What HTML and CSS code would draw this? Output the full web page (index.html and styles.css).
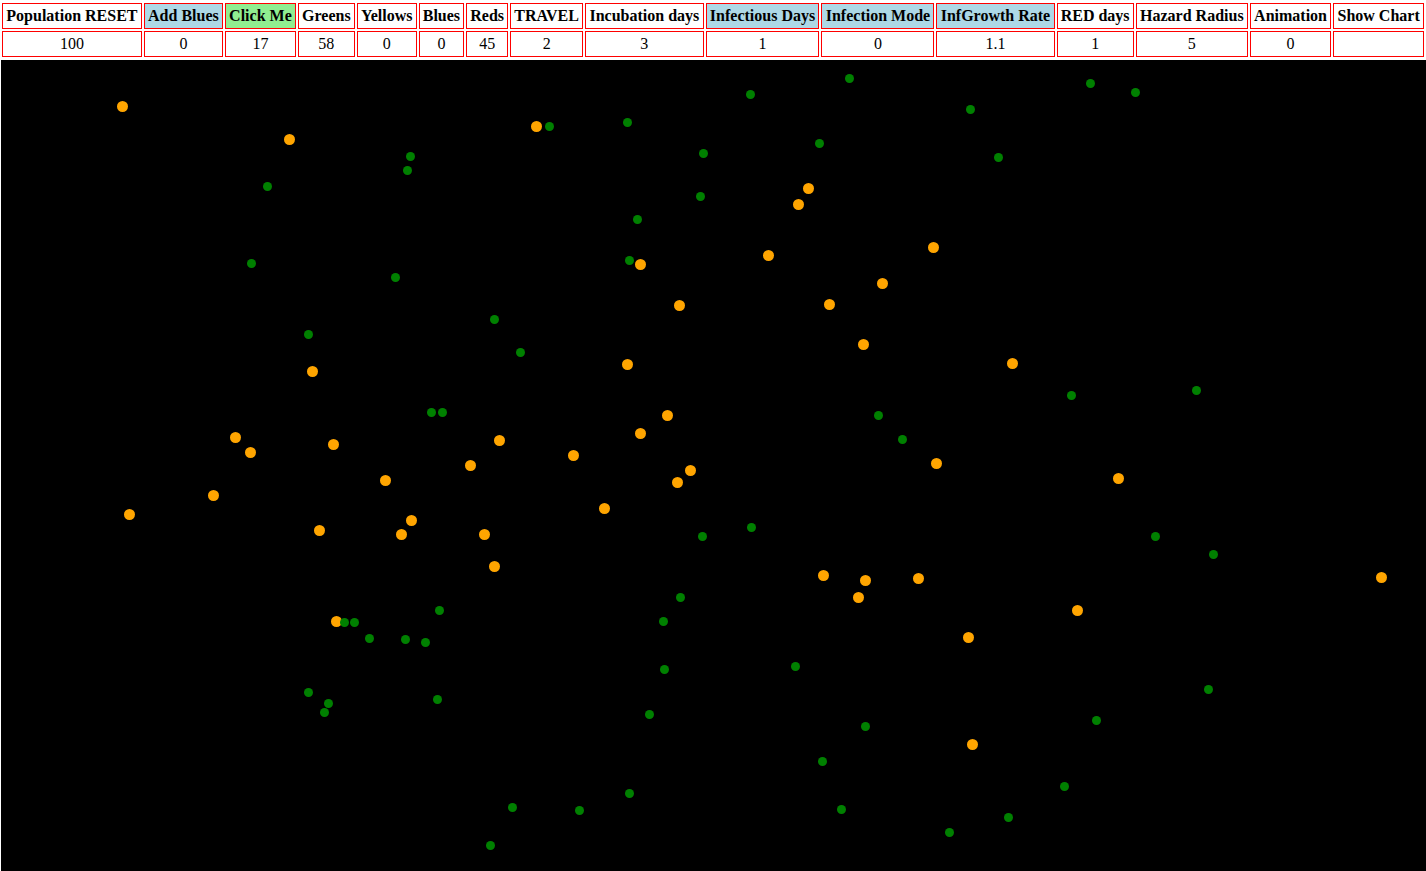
FILE: index.html
```html
<!DOCTYPE html>
<html>
<head>
<meta charset="utf-8">
<title>Simulation</title>
<link rel="stylesheet" href="styles.css">
</head>
<body>
<table class="controls">
  <tr class="heads">
    <th>Population RESET</th>
    <th class="blue">Add Blues</th>
    <th class="green">Click Me</th>
    <th>Greens</th>
    <th>Yellows</th>
    <th>Blues</th>
    <th>Reds</th>
    <th>TRAVEL</th>
    <th>Incubation days</th>
    <th class="blue">Infectious Days</th>
    <th class="blue">Infection Mode</th>
    <th class="blue">InfGrowth Rate</th>
    <th>RED days</th>
    <th>Hazard Radius</th>
    <th>Animation</th>
    <th>Show Chart</th>
  </tr>
  <tr class="vals">
    <td>100</td><td>0</td><td>17</td><td>58</td><td>0</td><td>0</td><td>45</td><td>2</td><td>3</td><td>1</td><td>0</td><td>1.1</td><td>1</td><td>5</td><td>0</td><td></td>
  </tr>
</table>
<div class="stage">
<svg class="canvas" width="1425" height="811" viewBox="0.5 59.5 1425 811">
<g fill="#ffa500">
<circle cx="122" cy="106" r="5.5"/><circle cx="289" cy="139" r="5.5"/><circle cx="536" cy="126" r="5.5"/><circle cx="808" cy="188" r="5.5"/><circle cx="798" cy="204" r="5.5"/><circle cx="768" cy="255" r="5.5"/><circle cx="933" cy="247" r="5.5"/><circle cx="640" cy="264" r="5.5"/><circle cx="882" cy="283" r="5.5"/><circle cx="679" cy="305" r="5.5"/><circle cx="829" cy="304" r="5.5"/><circle cx="863" cy="344" r="5.5"/><circle cx="627" cy="364" r="5.5"/><circle cx="1012" cy="363" r="5.5"/><circle cx="312" cy="371" r="5.5"/><circle cx="667" cy="415" r="5.5"/><circle cx="640" cy="433" r="5.5"/><circle cx="235" cy="437" r="5.5"/><circle cx="250" cy="452" r="5.5"/><circle cx="333" cy="444" r="5.5"/><circle cx="499" cy="440" r="5.5"/><circle cx="470" cy="465" r="5.5"/><circle cx="573" cy="455" r="5.5"/><circle cx="936" cy="463" r="5.5"/><circle cx="690" cy="470" r="5.5"/><circle cx="677" cy="482" r="5.5"/><circle cx="385" cy="480" r="5.5"/><circle cx="1118" cy="478" r="5.5"/><circle cx="213" cy="495" r="5.5"/><circle cx="129" cy="514" r="5.5"/><circle cx="604" cy="508" r="5.5"/><circle cx="411" cy="520" r="5.5"/><circle cx="319" cy="530" r="5.5"/><circle cx="401" cy="534" r="5.5"/><circle cx="484" cy="534" r="5.5"/><circle cx="494" cy="566" r="5.5"/><circle cx="823" cy="575" r="5.5"/><circle cx="865" cy="580" r="5.5"/><circle cx="918" cy="578" r="5.5"/><circle cx="858" cy="597" r="5.5"/><circle cx="1381" cy="577" r="5.5"/><circle cx="1077" cy="610" r="5.5"/><circle cx="336" cy="621" r="5.5"/><circle cx="968" cy="637" r="5.5"/><circle cx="972" cy="744" r="5.5"/>
</g>
<g fill="#008000">
<circle cx="849" cy="78" r="4.5"/><circle cx="750" cy="94" r="4.5"/><circle cx="1090" cy="83" r="4.5"/><circle cx="1135" cy="92" r="4.5"/><circle cx="970" cy="109" r="4.5"/><circle cx="549" cy="126" r="4.5"/><circle cx="627" cy="122" r="4.5"/><circle cx="703" cy="153" r="4.5"/><circle cx="819" cy="143" r="4.5"/><circle cx="410" cy="156" r="4.5"/><circle cx="407" cy="170" r="4.5"/><circle cx="998" cy="157" r="4.5"/><circle cx="267" cy="186" r="4.5"/><circle cx="700" cy="196" r="4.5"/><circle cx="637" cy="219" r="4.5"/><circle cx="251" cy="263" r="4.5"/><circle cx="629" cy="260" r="4.5"/><circle cx="395" cy="277" r="4.5"/><circle cx="308" cy="334" r="4.5"/><circle cx="494" cy="319" r="4.5"/><circle cx="520" cy="352" r="4.5"/><circle cx="1071" cy="395" r="4.5"/><circle cx="1196" cy="390" r="4.5"/><circle cx="431" cy="412" r="4.5"/><circle cx="442" cy="412" r="4.5"/><circle cx="878" cy="415" r="4.5"/><circle cx="902" cy="439" r="4.5"/><circle cx="751" cy="527" r="4.5"/><circle cx="702" cy="536" r="4.5"/><circle cx="1155" cy="536" r="4.5"/><circle cx="1213" cy="554" r="4.5"/><circle cx="680" cy="597" r="4.5"/><circle cx="439" cy="610" r="4.5"/><circle cx="663" cy="621" r="4.5"/><circle cx="344" cy="622" r="4.5"/><circle cx="354" cy="622" r="4.5"/><circle cx="369" cy="638" r="4.5"/><circle cx="405" cy="639" r="4.5"/><circle cx="425" cy="642" r="4.5"/><circle cx="664" cy="669" r="4.5"/><circle cx="795" cy="666" r="4.5"/><circle cx="1208" cy="689" r="4.5"/><circle cx="308" cy="692" r="4.5"/><circle cx="328" cy="703" r="4.5"/><circle cx="324" cy="712" r="4.5"/><circle cx="437" cy="699" r="4.5"/><circle cx="649" cy="714" r="4.5"/><circle cx="1096" cy="720" r="4.5"/><circle cx="865" cy="726" r="4.5"/><circle cx="822" cy="761" r="4.5"/><circle cx="1064" cy="786" r="4.5"/><circle cx="629" cy="793" r="4.5"/><circle cx="512" cy="807" r="4.5"/><circle cx="579" cy="810" r="4.5"/><circle cx="841" cy="809" r="4.5"/><circle cx="1008" cy="817" r="4.5"/><circle cx="949" cy="832" r="4.5"/><circle cx="490" cy="845" r="4.5"/>
</g>
</svg>
</div>
</body>
</html>
```

FILE: styles.css
```css
html, body {
  margin: 0;
  padding: 0;
  background: #fff;
  overflow: hidden;
}
body {
  font-family: "Liberation Serif", "Times New Roman", serif;
  font-size: 16px;
  color: #000;
}
.controls {
  width: 100%;
  border-collapse: separate;
  border-spacing: 2px;
  margin-top: 1px;
}
.controls th,
.controls td {
  border: 1px solid #ff0000;
  padding: 3px 3px;
  text-align: center;
  white-space: nowrap;
  line-height: 18px;
}
.controls th {
  font-weight: bold;
}
.controls td {
  font-weight: normal;
}
.controls .blue {
  background: #add8e6;
}
.controls .green {
  background: #90ee90;
}
.stage {
  margin-top: 1px;
  padding-left: 1px;
  background: #fff;
  display: flex;
}
.canvas {
  display: block;
  background: #000;
}
```
